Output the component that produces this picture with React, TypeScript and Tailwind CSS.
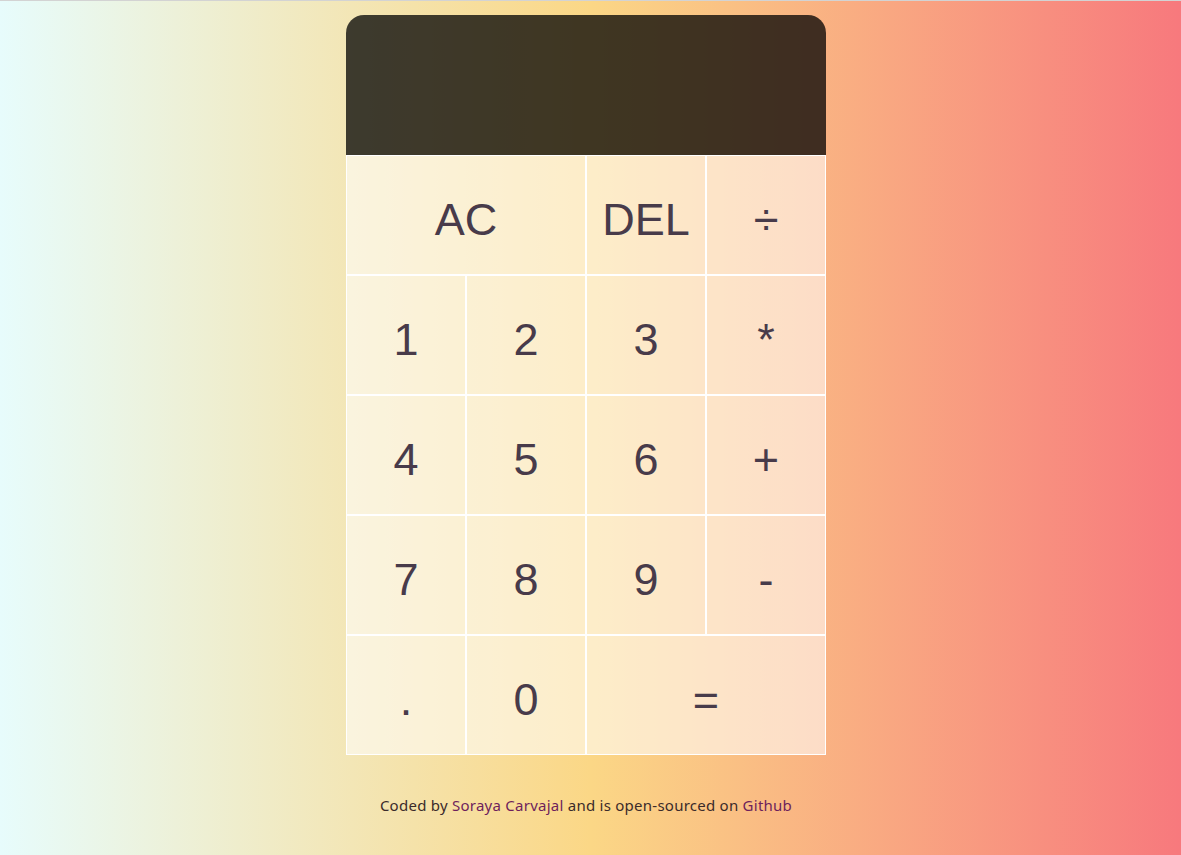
import React from 'react';

type Key = { label: string; span?: string };

const keys: Key[] = [
  { label: 'AC', span: 'col-span-2' },
  { label: 'DEL' },
  { label: '÷' },
  { label: '1' },
  { label: '2' },
  { label: '3' },
  { label: '*' },
  { label: '4' },
  { label: '5' },
  { label: '6' },
  { label: '+' },
  { label: '7' },
  { label: '8' },
  { label: '9' },
  { label: '-' },
  { label: '.' },
  { label: '0' },
  { label: '=', span: 'col-span-2' }
];

export default function App() {
  return (
    <div className="min-h-screen w-full border-t border-[#d3d3d3] bg-[linear-gradient(to_right,#e7fcfc,#fbd786,#f7797d)] flex flex-col items-center pt-[14px] pr-[9px]">
      {/* calculator */}
      <div className="grid grid-cols-[repeat(4,120px)] grid-rows-[140px_repeat(5,120px)]">
        <div className="col-span-4 bg-black/75 rounded-t-[18px] flex flex-col items-end justify-around p-3 text-white break-all" />
        {keys.map((k) => (
          <button
            key={k.label}
            className={`${k.span ?? ''} border border-white bg-white/55 text-[#483b4a] text-[45px] font-['Liberation_Sans',Arial,sans-serif] cursor-pointer outline-none flex items-center justify-center pt-[10px]`}
          >
            {k.label}
          </button>
        ))}
      </div>

      <p className="mt-[39px] text-[15px] tracking-[0.25px] text-[#3b2b2b] font-['Noto_Sans','Open_Sans',sans-serif]">
        Coded by <a className="text-[#6e1f5c]">Soraya Carvajal</a> and is open-sourced on{' '}
        <a className="text-[#6e1f5c]">Github</a>
      </p>
    </div>
  );
}
